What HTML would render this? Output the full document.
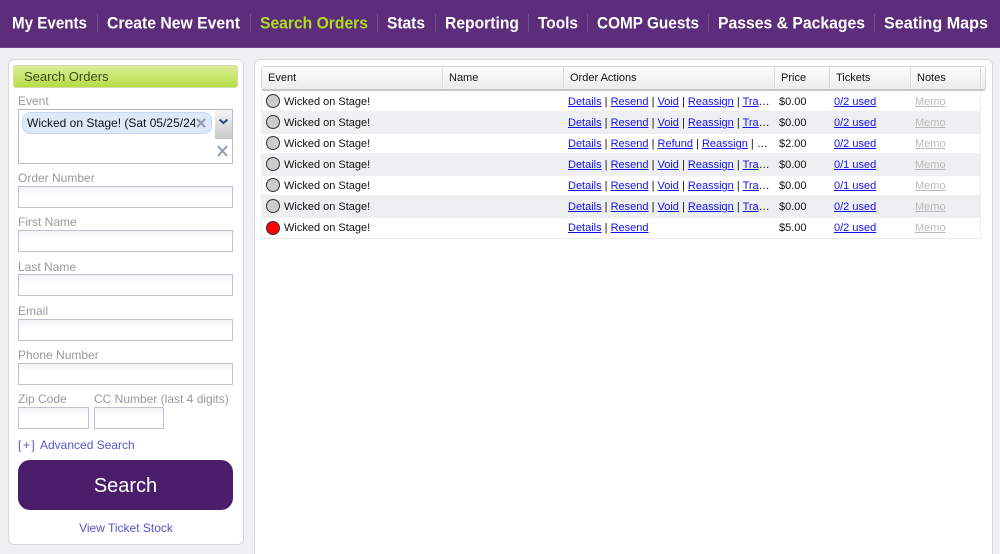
<!DOCTYPE html>
<html><head><meta charset="utf-8"><style>
*{box-sizing:border-box}
html,body{margin:0;padding:0;overflow:hidden}
html{width:1000px;height:554px}
body{width:1000px;height:554px;overflow:hidden;background:#eef0f2;font-family:"Liberation Sans",sans-serif;position:relative}
div,span.a{position:absolute}
.panel{background:#fff;border:1px solid #d6d8da;border-radius:6px}
.lb{left:18px;font-size:12px;line-height:15px;color:#999;white-space:nowrap}
.in{left:18px;width:215px;height:22px;border:1px solid #c0c2d4;background:linear-gradient(#f1f3f5,#fff 8px)}
.sep{top:14px;width:1px;height:18px;background:#75508f}
.row{left:261px;width:720px}
.t{margin-top:1px;font-size:11px;line-height:14px;color:#111;white-space:nowrap}
.t a{color:#1212ee;text-decoration:underline}
.c{left:266px;width:14px;height:14px;border-radius:50%;border:1.5px solid #333;background:#ccc}
.h{top:71px;font-size:11px;line-height:14px;color:#111;white-space:nowrap}
.hs{top:67px;height:22px;background:#d8d8d8;border-right:1px solid #fafafa;width:2px}
.m{left:915px;color:#bbb;text-decoration:underline}
</style></head><body>
<div style="left:0;top:0;width:1000px;height:48px;background:#5c2d7b;border-bottom:1px solid #6f4a8c"></div>
<svg style="position:absolute;left:0;top:0" width="1000" height="48" font-family="Liberation Sans, sans-serif" font-size="17" font-weight="700" fill="#fff">
<text x="12" y="28.500" textLength="75" lengthAdjust="spacingAndGlyphs">My Events</text>
<text x="107" y="28.500" textLength="133" lengthAdjust="spacingAndGlyphs">Create New Event</text>
<text x="260" y="28.500" textLength="108" lengthAdjust="spacingAndGlyphs" fill="#b0dc1e">Search Orders</text>
<text x="387" y="28.500" textLength="38" lengthAdjust="spacingAndGlyphs">Stats</text>
<text x="445" y="28.500" textLength="74" lengthAdjust="spacingAndGlyphs">Reporting</text>
<text x="538" y="28.500" textLength="40" lengthAdjust="spacingAndGlyphs">Tools</text>
<text x="597" y="28.500" textLength="102" lengthAdjust="spacingAndGlyphs">COMP Guests</text>
<text x="718" y="28.500" textLength="147" lengthAdjust="spacingAndGlyphs">Passes &amp; Packages</text>
<text x="884" y="28.500" textLength="104" lengthAdjust="spacingAndGlyphs">Seating Maps</text>
</svg>
<div class="sep" style="left:97px"></div><div class="sep" style="left:250px"></div><div class="sep" style="left:377px"></div><div class="sep" style="left:435px"></div><div class="sep" style="left:528px"></div><div class="sep" style="left:587px"></div><div class="sep" style="left:708px"></div><div class="sep" style="left:874px"></div>

<div class="panel" style="left:8px;top:59px;width:236px;height:486px"></div>
<div style="left:13px;top:65px;width:225px;height:23px;border:1px solid #d0dcae;border-radius:3px;background:linear-gradient(#dcef96,#b4dc46);font-size:13px;line-height:21px;padding-left:10px;color:#3c4a20">Search Orders</div>

<div class="lb" style="top:94px">Event</div>
<div style="left:18px;top:109px;width:215px;height:55px;border:1px solid #b8bac8;background:#fff"></div>
<div style="left:22px;top:112px;width:190px;height:22px;background:#dde8f8;border:1px solid #c8d8f0;border-radius:8px"></div>
<div style="left:27px;top:116px;width:168px;overflow:hidden;font-size:12px;line-height:15px;color:#111;white-space:nowrap">Wicked on Stage! (Sat 05/25/24 7:00pm)</div>
<div style="left:215px;top:110px;width:17px;height:29px;background:linear-gradient(#f4f4f4,#c8c8c8)"></div>
<svg style="position:absolute;left:0;top:0" width="250" height="170" fill="none">
<path d="M219.500 119.500l4 3.500 4-3.500" stroke="#2a4a8a" stroke-width="2"/>
<path d="M197 119l8 8M205 119l-8 8" stroke="#8f9ab0" stroke-width="2"/>
<path d="M218 146l9 10M227 146l-9 10" stroke="#8f9ab8" stroke-width="2"/>
</svg>

<div class="lb" style="top:171px">Order Number</div><div class="in" style="top:186px"></div>
<div class="lb" style="top:215px">First Name</div><div class="in" style="top:230px"></div>
<div class="lb" style="top:260px">Last Name</div><div class="in" style="top:274px"></div>
<div class="lb" style="top:304px">Email</div><div class="in" style="top:319px"></div>
<div class="lb" style="top:348px">Phone Number</div><div class="in" style="top:363px"></div>
<div class="lb" style="top:392px">Zip Code</div>
<div class="lb" style="top:392px;left:94px">CC Number (last 4 digits)</div>
<div class="in" style="top:407px;width:71px"></div>
<div class="in" style="top:407px;left:94px;width:70px"></div>
<div style="left:18px;top:438px;font-size:12px;line-height:15px;color:#5555cc;white-space:nowrap;letter-spacing:1.500px">[+]</div>
<div style="left:40px;top:438px;font-size:12px;line-height:15px;color:#5555cc;white-space:nowrap">Advanced Search</div>
<div style="left:18px;top:460px;width:215px;height:50px;background:#4b1e6c;border-radius:12px;color:#fff;font-size:20px;line-height:52px;text-align:center">Search</div>
<div style="left:8px;width:236px;top:521px;font-size:12px;line-height:15px;color:#5555cc;text-align:center">View Ticket Stock</div>

<div class="panel" style="left:254px;top:59px;width:739px;height:495px;border-bottom:0;border-radius:6px 6px 0 0"></div>
<div style="left:261px;top:66px;width:725px;height:25px;border:1px solid #d6d6d6;border-bottom:2px solid #c8c8c8;border-radius:3px;background:linear-gradient(#fdfdfd,#ececec)"></div>
<div class="hs" style="left:442px"></div><div class="hs" style="left:563px"></div><div class="hs" style="left:774px"></div><div class="hs" style="left:829px"></div><div class="hs" style="left:910px"></div><div class="hs" style="left:980px"></div>
<div class="h" style="left:268px">Event</div><div class="h" style="left:449px">Name</div><div class="h" style="left:570px">Order Actions</div><div class="h" style="left:781px">Price</div><div class="h" style="left:836px">Tickets</div><div class="h" style="left:917px">Notes</div>

<div class="row" style="top:111px;height:23px;background:#eeeff0"></div>
<div class="row" style="top:153px;height:23px;background:#eeeff0"></div>
<div class="row" style="top:195px;height:23px;background:#eeeff0"></div>
<div style="left:261px;top:91px;width:1px;height:148px;background:#eee"></div>
<div style="left:980px;top:91px;width:1px;height:148px;background:#eee"></div>
<div style="left:261px;top:238px;width:720px;height:1px;background:#e8e8e8"></div>

<div class="c" style="top:94px"></div><div class="t" style="left:284px;top:94px">Wicked on Stage!</div>
<div class="t" style="left:568px;top:94px"><a>Details</a> | <a>Resend</a> | <a>Void</a> | <a>Reassign</a> | <a>Tra</a>…</div>
<div class="t" style="left:779px;top:94px">$0.00</div><div class="t" style="left:834px;top:94px"><a>0/2 used</a></div><div class="t m" style="top:94px">Memo</div>

<div class="c" style="top:115px"></div><div class="t" style="left:284px;top:115px">Wicked on Stage!</div>
<div class="t" style="left:568px;top:115px"><a>Details</a> | <a>Resend</a> | <a>Void</a> | <a>Reassign</a> | <a>Tra</a>…</div>
<div class="t" style="left:779px;top:115px">$0.00</div><div class="t" style="left:834px;top:115px"><a>0/2 used</a></div><div class="t m" style="top:115px">Memo</div>

<div class="c" style="top:136px"></div><div class="t" style="left:284px;top:136px">Wicked on Stage!</div>
<div class="t" style="left:568px;top:136px"><a>Details</a> | <a>Resend</a> | <a>Refund</a> | <a>Reassign</a> | …</div>
<div class="t" style="left:779px;top:136px">$2.00</div><div class="t" style="left:834px;top:136px"><a>0/2 used</a></div><div class="t m" style="top:136px">Memo</div>

<div class="c" style="top:157px"></div><div class="t" style="left:284px;top:157px">Wicked on Stage!</div>
<div class="t" style="left:568px;top:157px"><a>Details</a> | <a>Resend</a> | <a>Void</a> | <a>Reassign</a> | <a>Tra</a>…</div>
<div class="t" style="left:779px;top:157px">$0.00</div><div class="t" style="left:834px;top:157px"><a>0/1 used</a></div><div class="t m" style="top:157px">Memo</div>

<div class="c" style="top:178px"></div><div class="t" style="left:284px;top:178px">Wicked on Stage!</div>
<div class="t" style="left:568px;top:178px"><a>Details</a> | <a>Resend</a> | <a>Void</a> | <a>Reassign</a> | <a>Tra</a>…</div>
<div class="t" style="left:779px;top:178px">$0.00</div><div class="t" style="left:834px;top:178px"><a>0/1 used</a></div><div class="t m" style="top:178px">Memo</div>

<div class="c" style="top:199px"></div><div class="t" style="left:284px;top:199px">Wicked on Stage!</div>
<div class="t" style="left:568px;top:199px"><a>Details</a> | <a>Resend</a> | <a>Void</a> | <a>Reassign</a> | <a>Tra</a>…</div>
<div class="t" style="left:779px;top:199px">$0.00</div><div class="t" style="left:834px;top:199px"><a>0/2 used</a></div><div class="t m" style="top:199px">Memo</div>

<div class="c" style="top:221px;background:#f00"></div><div class="t" style="left:284px;top:220px">Wicked on Stage!</div>
<div class="t" style="left:568px;top:220px"><a>Details</a> | <a>Resend</a></div>
<div class="t" style="left:779px;top:220px">$5.00</div><div class="t" style="left:834px;top:220px"><a>0/2 used</a></div><div class="t m" style="top:220px">Memo</div>
</body></html>
